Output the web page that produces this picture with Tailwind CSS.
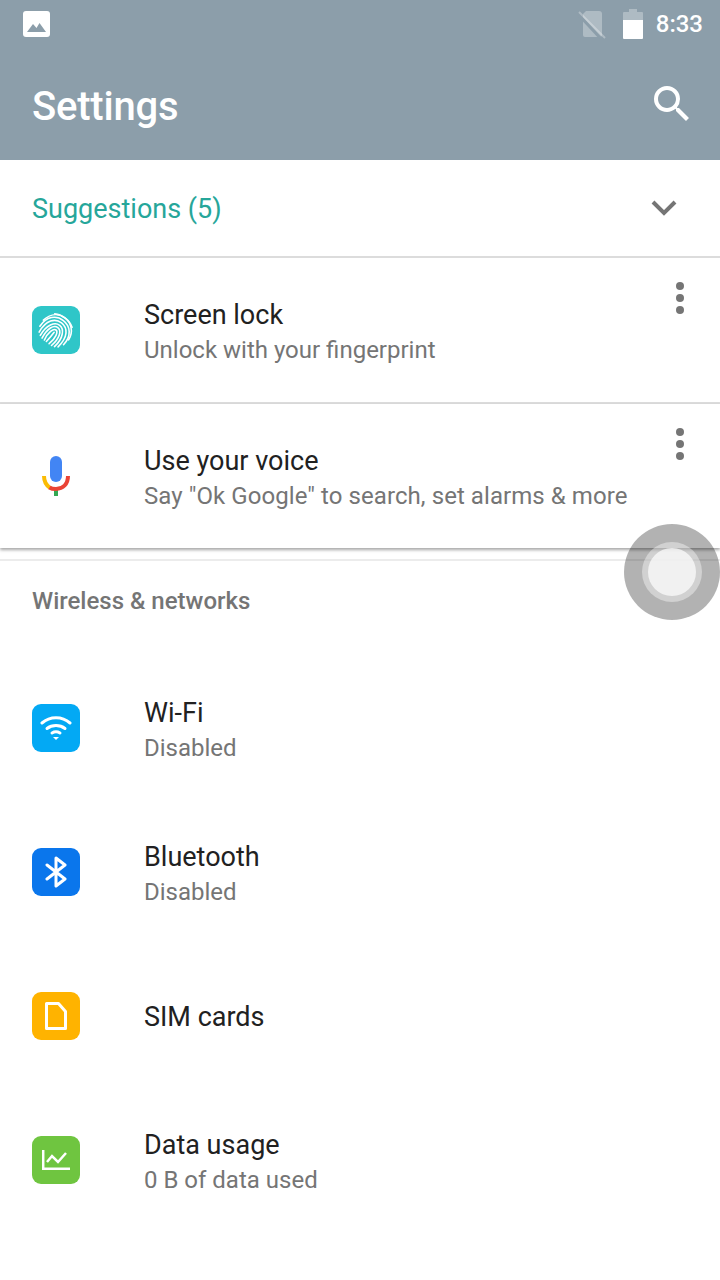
<!DOCTYPE html>
<html lang="en">
<head>
    <meta charset="UTF-8">
    <meta name="viewport" content="width=device-width, initial-scale=1.0">
    <title>Settings</title>
    <script src="https://cdn.jsdelivr.net/npm/@tailwindcss/browser@4"></script>
</head>
<body class="bg-white font-['Roboto',sans-serif] w-[720px] h-[1280px] overflow-hidden relative">

    <!-- Header -->
    <header class="bg-[#8c9eaa] h-[160px] text-white">
        <div class="h-[48px] flex items-center pl-[23px] pr-[17px]">
            <svg width="27" height="27" viewBox="0 0 27 27"><rect x="0" y="0" width="27" height="26" rx="3" fill="#fff"/><path d="M4 21l6-8 3.500 4 3-5 6.500 9z" fill="#8c9eaa"/></svg>
            <div class="ml-auto flex items-center">
                <svg width="28" height="30" viewBox="0 0 28 30"><path d="M8 2h13a3 3 0 0 1 3 3v21a2 2 0 0 1-2 2H7a2 2 0 0 1-2-2V5z" fill="#fff" fill-opacity=".3"/><path d="M1 6l24 26" stroke="#8c9eaa" stroke-width="3"/><path d="M1 3l26 26" stroke="#fff" stroke-opacity=".3" stroke-width="2"/></svg>
                <svg class="ml-[17px]" width="20" height="30" viewBox="0 0 20 30"><path d="M6 0h8v3h5a1 1 0 0 1 1 1v9H0V4a1 1 0 0 1 1-1h5z" fill="#fff" fill-opacity=".3"/><path d="M0 11h20v18a1 1 0 0 1-1 1H1a1 1 0 0 1-1-1z" fill="#fff"/></svg>
                <span class="ml-[13px] text-[24px] font-medium leading-none">8:33</span>
            </div>
        </div>
        <div class="h-[112px] flex items-center pl-[32px] pr-[24px] pt-[6px]">
            <h1 class="text-[40px] font-medium leading-none tracking-[-0.2px]">Settings</h1>
            <svg class="ml-auto mb-[6px]" width="48" height="48" viewBox="0 0 24 24" fill="#fff"><path d="M15.500 14h-.79l-.28-.27A6.470 6.470 0 0 0 16 9.500 6.500 6.500 0 1 0 9.500 16c1.610 0 3.090-.59 4.230-1.570l.27.28v.79l5 4.990L20.490 19l-4.990-5zm-6 0C7.010 14 5 11.990 5 9.500S7.010 5 9.500 5 14 7.010 14 9.500 11.990 14 9.500 14z"/></svg>
        </div>
    </header>

    <!-- Suggestions -->
    <section class="h-[98px] border-b-2 border-[#dcdcdc] flex items-center pl-[32px] pr-[43px]">
        <span class="text-[27px] text-[#26a69a] leading-none mt-[2px]">Suggestions (5)</span>
        <svg class="ml-auto" width="26" height="16" viewBox="0 0 26 16"><path d="M2 2l11 11L24 2" fill="none" stroke="#757575" stroke-width="4"/></svg>
    </section>

    <!-- Suggestion cards -->
    <section class="h-[146px] border-b-2 border-[#dcdcdc] flex items-center pl-[32px] relative">
        <div class="w-[48px] h-[48px] rounded-[9px] bg-[#2fc6c8] flex items-center justify-center shrink-0">
            <svg width="38" height="38" viewBox="0 0 38 38" fill="none" stroke="#fff" stroke-width="1.600" stroke-linecap="round"><g transform="rotate(38 19 19)"><path d="M8 7c6-4 16-4 22 0"/><path d="M3 19C5 8 12 4 19 4s15 5 16 15"/><path d="M4 26C3 14 10 7 19 7s16 7 15 19"/><path d="M7 31C5 17 11 10 19 10s14 7 12 21"/><path d="M10 33C8 21 13 13 19 13s11 8 9 20"/><path d="M13 34c-2-11 1-18 6-18s8 7 6 18"/><path d="M16 34c-2-8 0-15 3-15s5 7 3 15"/><path d="M19 22c0 4 0 8-.5 12"/></g></svg>
        </div>
        <div class="ml-[64px] mt-[4px]">
            <div class="text-[27px] leading-[36px] text-[#212121]">Screen lock</div>
            <div class="text-[24px] leading-[34px] text-[#757575]">Unlock with your fingerprint</div>
        </div>
        <div class="absolute right-[36px] top-[24px] flex flex-col gap-[4px]">
            <span class="w-[8px] h-[8px] rounded-full bg-[#757575]"></span><span class="w-[8px] h-[8px] rounded-full bg-[#757575]"></span><span class="w-[8px] h-[8px] rounded-full bg-[#757575]"></span>
        </div>
    </section>
    <section class="h-[144px] flex items-center pl-[32px] relative shadow-[0_2px_3px_rgba(0,0,0,0.35)]">
        <div class="w-[48px] h-[48px] flex items-center justify-center shrink-0">
            <svg width="28" height="40" viewBox="0 0 28 40" fill="none"><rect x="8" y="0" width="12" height="26" rx="6" fill="#4285f4"/><path d="M12 34v6h4v-6z" fill="#34a853"/><path d="M2 20c0 5 2 9 6 12" stroke="#fbbc05" stroke-width="4"/><path d="M26 20c0 8-5 13-12 13-3 0-5-.5-6.500-1.500" stroke="#ea4335" stroke-width="4"/></svg>
        </div>
        <div class="ml-[64px] mt-[4px]">
            <div class="text-[27px] leading-[36px] text-[#212121]">Use your voice</div>
            <div class="text-[24px] leading-[34px] tracking-[0.07px] text-[#757575]">Say "Ok Google" to search, set alarms &amp; more</div>
        </div>
        <div class="absolute right-[36px] top-[24px] flex flex-col gap-[4px]">
            <span class="w-[8px] h-[8px] rounded-full bg-[#757575]"></span><span class="w-[8px] h-[8px] rounded-full bg-[#757575]"></span><span class="w-[8px] h-[8px] rounded-full bg-[#757575]"></span>
        </div>
    </section>

    <!-- Wireless & networks -->
    <div class="mt-[11px] border-t-2 border-[#ececec] h-[97px] pl-[32px] pt-[26px]">
        <div class="text-[24px] font-medium leading-[28px] text-[#757575]">Wireless &amp; networks</div>
    </div>

    <div class="flex flex-col">
        <div class="h-[144px] flex items-center pl-[32px]">
            <div class="w-[48px] h-[48px] rounded-[9px] bg-[#03a9f4] flex items-center justify-center shrink-0">
                <svg width="32" height="26" viewBox="0 0 32 26" fill="none" stroke="#fff" stroke-width="3" stroke-linecap="round"><path d="M2 8c8-7 20-7 28 0"/><path d="M7 13.500c5-4 13-4 18 0"/><path d="M12 18c2.500-1.500 5.500-1.500 8 0"/><path d="M13 22h6l-3 3z" fill="#fff" stroke="none"/></svg>
            </div>
            <div class="ml-[64px] mt-[4px]">
                <div class="text-[27px] leading-[36px] text-[#212121]">Wi-Fi</div>
                <div class="text-[24px] leading-[34px] text-[#757575]">Disabled</div>
            </div>
        </div>
        <div class="h-[144px] flex items-center pl-[32px]">
            <div class="w-[48px] h-[48px] rounded-[9px] bg-[#0a76ec] flex items-center justify-center shrink-0">
                <svg width="22" height="32" viewBox="0 0 22 32" fill="none" stroke="#fff" stroke-width="3" stroke-linejoin="round" stroke-linecap="round"><path d="M2 9l18 14-9 7V2l9 7L2 23"/></svg>
            </div>
            <div class="ml-[64px] mt-[4px]">
                <div class="text-[27px] leading-[36px] text-[#212121]">Bluetooth</div>
                <div class="text-[24px] leading-[34px] text-[#757575]">Disabled</div>
            </div>
        </div>
        <div class="h-[144px] flex items-center pl-[32px]">
            <div class="w-[48px] h-[48px] rounded-[9px] bg-[#ffb300] flex items-center justify-center shrink-0">
                <svg width="22" height="28" viewBox="0 0 22 28" fill="none" stroke="#fff" stroke-width="3" stroke-linejoin="round"><path d="M1.500 1.500h12l7 8v17h-19z"/></svg>
            </div>
            <div class="ml-[64px] mt-[2px]">
                <div class="text-[27px] leading-[36px] text-[#212121]">SIM cards</div>
            </div>
        </div>
        <div class="h-[144px] flex items-center pl-[32px]">
            <div class="w-[48px] h-[48px] rounded-[9px] bg-[#6fc540] flex items-center justify-center shrink-0">
                <svg width="28" height="20" viewBox="0 0 28 20" fill="none" stroke="#fff" stroke-width="2.500"><path d="M1.200 0v18.700H28"/><path d="M5 12l5-6 6 6 8-9"/></svg>
            </div>
            <div class="ml-[64px] mt-[4px]">
                <div class="text-[27px] leading-[36px] text-[#212121]">Data usage</div>
                <div class="text-[24px] leading-[34px] text-[#757575]">0 B of data used</div>
            </div>
        </div>
    </div>

    <!-- Floating assistive touch button -->
    <div class="absolute left-[624px] top-[524px] w-[96px] h-[96px] rounded-full bg-black/30 flex items-center justify-center">
        <div class="w-[60px] h-[60px] rounded-full bg-white/40 flex items-center justify-center">
            <div class="w-[48px] h-[48px] rounded-full bg-white/70"></div>
        </div>
    </div>
</body>
</html>
